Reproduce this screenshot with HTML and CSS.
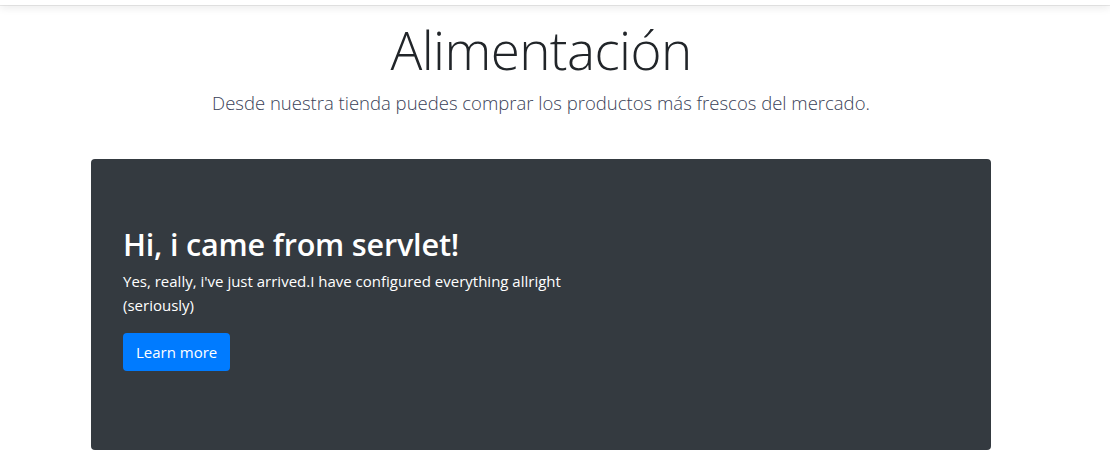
FILE: index.html
```html
<!DOCTYPE html>
<html lang="es">
<head>
<meta charset="utf-8">
<title>Alimentación</title>
<link rel="stylesheet" href="styles.css">
</head>
<body>
<div class="topbar"></div>
<div class="page">
  <header class="hero-head">
    <h1 class="title">Alimentación</h1>
    <p class="lead">Desde nuestra tienda puedes comprar los productos más frescos del mercado.</p>
  </header>
  <section class="jumbotron">
    <h2 class="jt-title">Hi, i came from servlet!</h2>
    <p class="jt-text">Yes, really, i've just arrived.I have configured everything allright<br>(seriously)</p>
    <a class="btn" href="#">Learn more</a>
  </section>
</div>
</body>
</html>
```

FILE: styles.css
```css
* { box-sizing: border-box; }
html, body { margin: 0; padding: 0; background: #fff; }
body {
  font-family: "Open Sans", "Noto Sans", "Liberation Sans", sans-serif;
  color: #212529;
  width: 1110px;
  overflow: hidden;
}
.topbar {
  height: 5px;
  background: #fff;
  box-shadow: 0 1px 0 rgba(0,0,0,0.08), 0 2px 8px rgba(0,0,0,0.12);
  position: relative;
  z-index: 2;
}
.page {
  width: 1082px;
  display: flex;
  flex-direction: column;
  align-items: center;
}
.hero-head {
  text-align: center;
  padding-top: 13px;
}
.title {
  margin: 0;
  font-size: 53px;
  font-weight: 300;
  line-height: 1.2;
  letter-spacing: -0.6px;
  color: #212529;
}
.lead {
  margin: 7px 0 0;
  font-size: 18.5px;
  font-weight: 300;
  line-height: 1.5;
  color: #3a3f58;
}
.jumbotron {
  margin-top: 43px;
  width: 900px;
  height: 291px;
  background: #343a40;
  border-radius: 4px;
  padding: 67px 32px 60px;
  color: #fff;
}
.jt-title {
  margin: 0 0 6px;
  font-size: 30.6px;
  font-weight: 600;
  line-height: 1.2;
  letter-spacing: -0.2px;
}
.jt-text {
  margin: 0 0 16px;
  font-size: 15px;
  line-height: 24px;
}
.btn {
  display: inline-block;
  background: #007bff;
  color: #fff;
  text-decoration: none;
  font-size: 15px;
  line-height: 24px;
  padding: 7px 13px;
  border-radius: 4px;
}
```
